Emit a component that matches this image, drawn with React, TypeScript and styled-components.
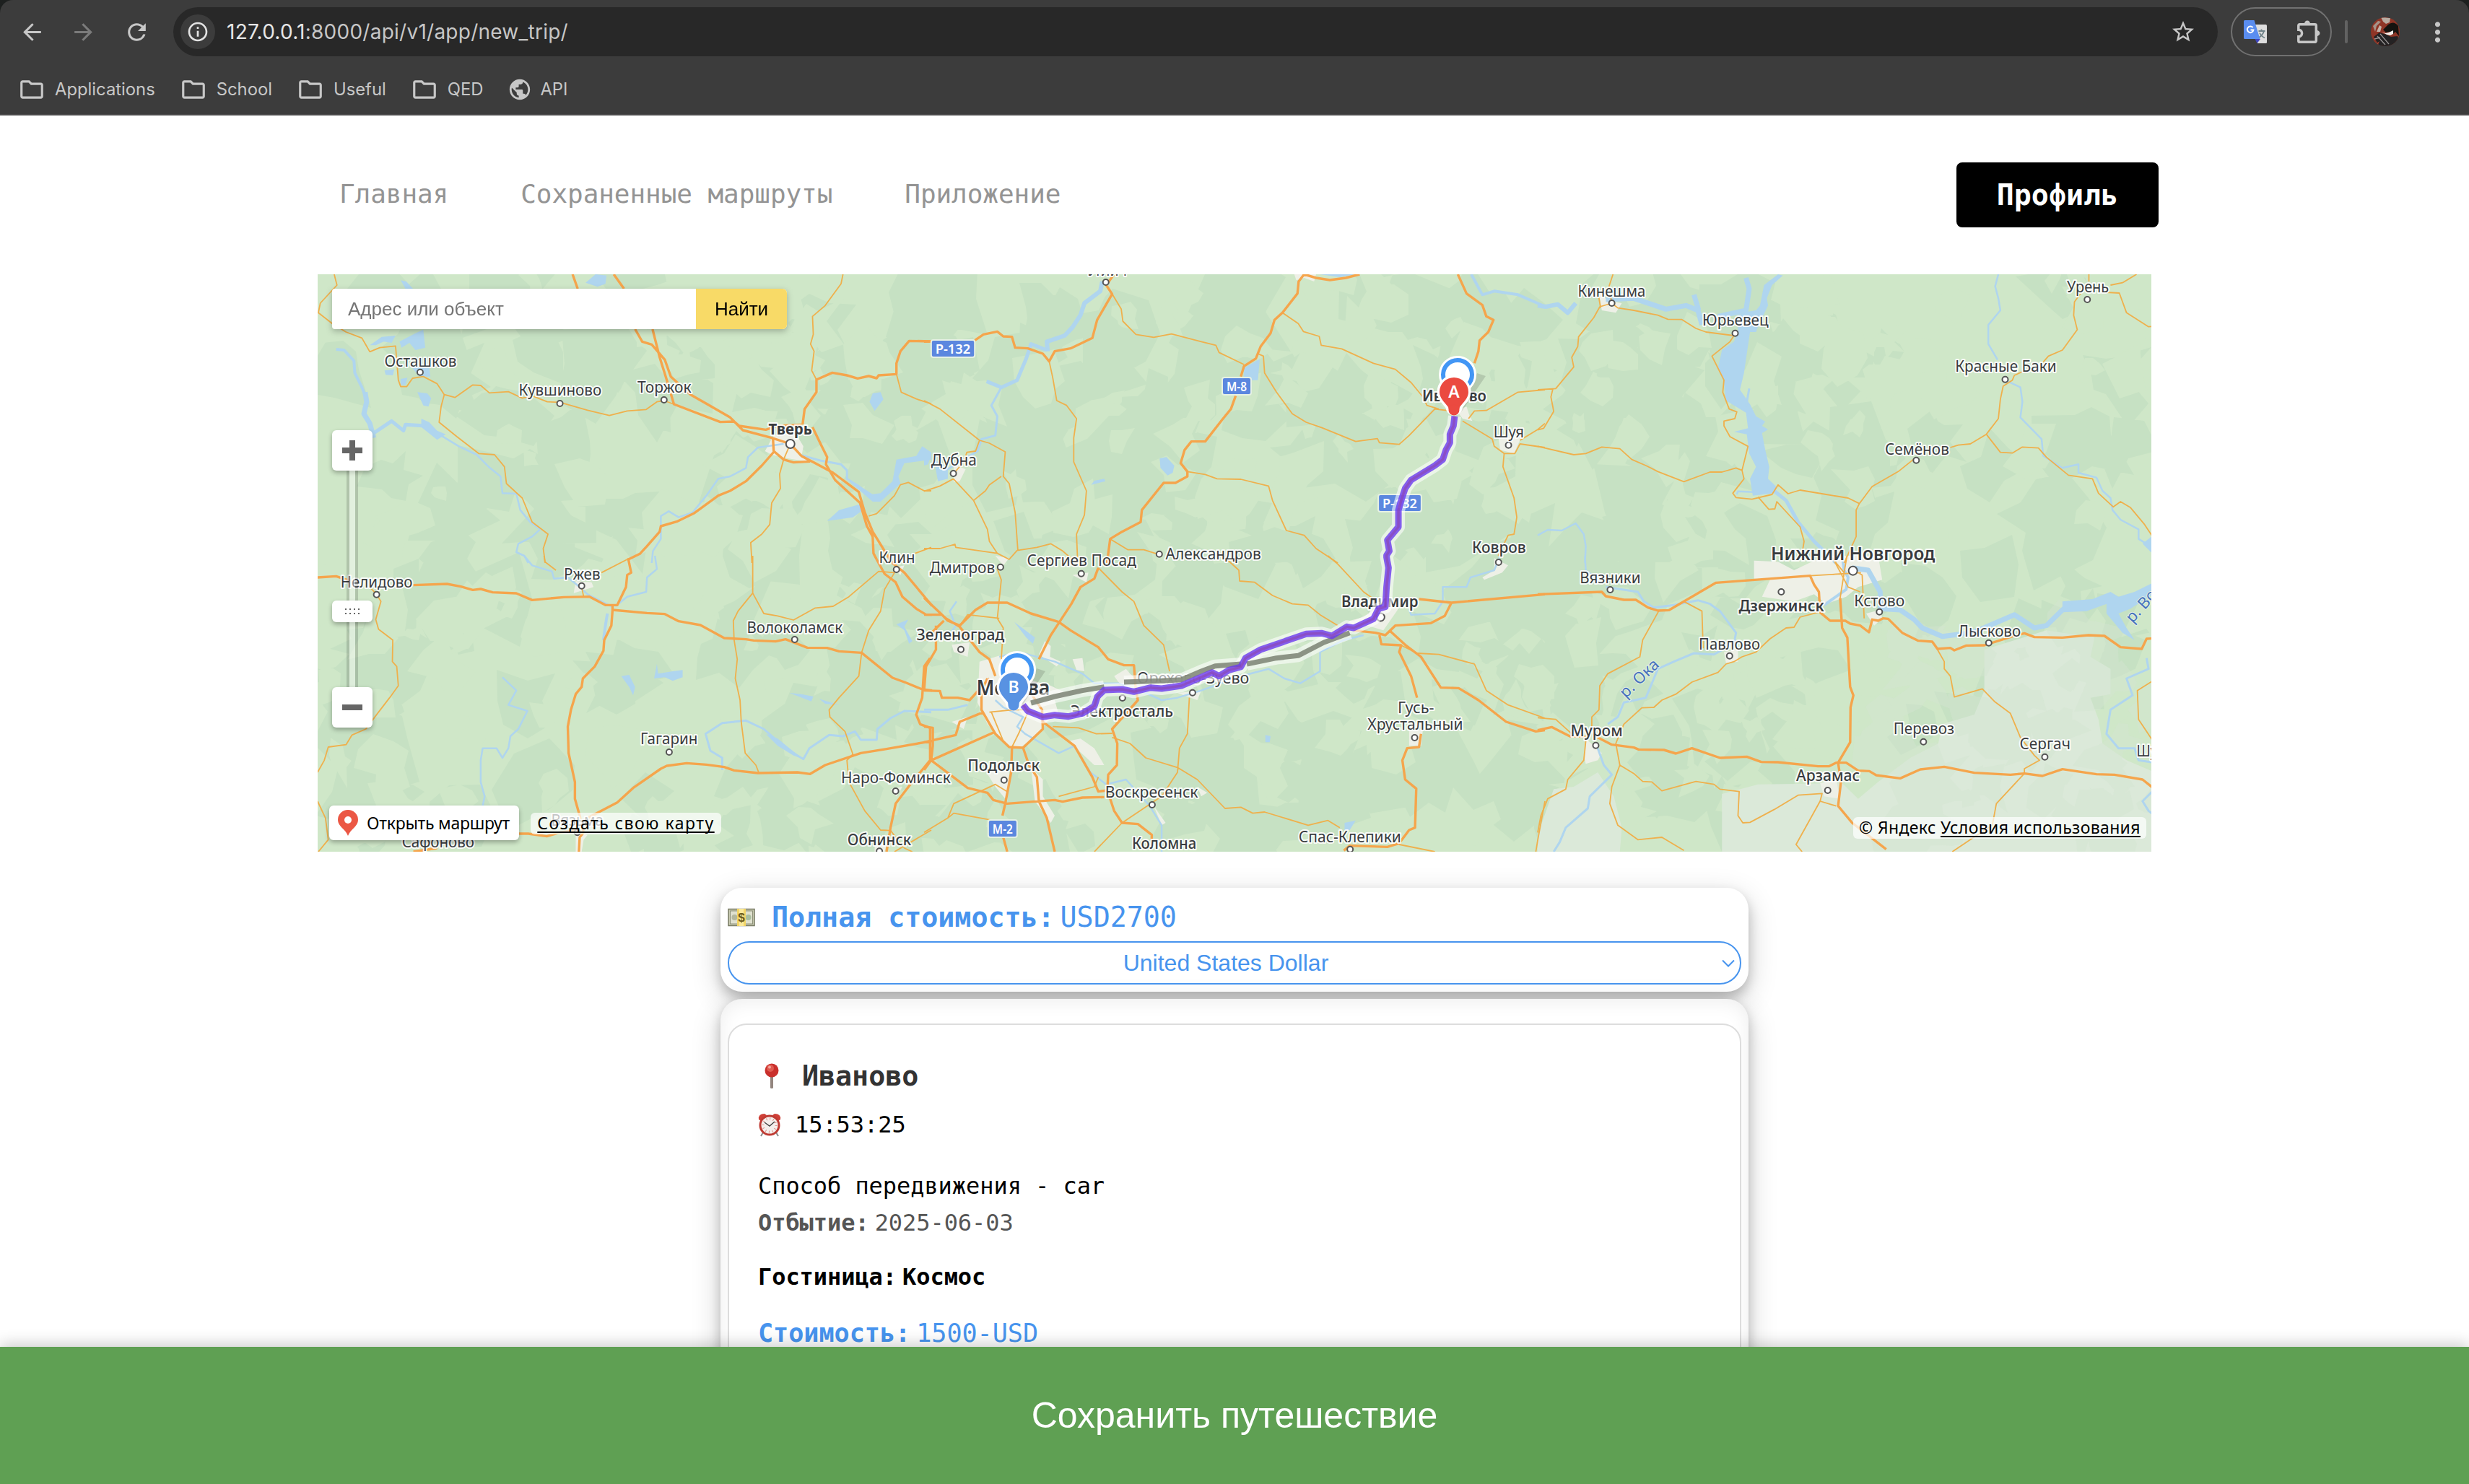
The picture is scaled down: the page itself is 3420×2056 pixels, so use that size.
import React from "react";
import styled, { createGlobalStyle } from "styled-components";
import {
  MdArrowBack,
  MdArrowForward,
  MdInfoOutline,
  MdMoreVert,
  MdOutlineFolder,
  MdPublic,
  MdRefresh,
  MdStarOutline,
} from "react-icons/md";

const GlobalStyle = createGlobalStyle`
  *, *::before, *::after { box-sizing: border-box; }
  body { margin: 0; background: #fff; }
`;

const mono = `"DejaVu Sans Mono", "Liberation Mono", monospace`;
const sans = `"Liberation Sans", Arial, sans-serif`;
const ui = `Inter, Roboto, sans-serif`;
const mapFont = `"Noto Sans", "Open Sans", sans-serif`;
const blue = "#4794ee";

/* ---------- window ---------- */

const Window = styled.div`
  position: relative;
  display: flex;
  flex-direction: column;
  width: 3420px;
  height: 2056px;
  overflow: hidden;
  background: #fff;
`;

const ChromeBack = styled.header`
  background: #1d201f;
`;

const Chrome = styled.div`
  display: flex;
  flex-direction: column;
  height: 160px;
  background: #3c3c3c;
  border-bottom: 2px solid #4b4a4b;
  border-radius: 18px 18px 0 0;
  font-family: ${ui};
  color: #c7c7c7;
`;

const Toolbar = styled.div`
  display: flex;
  align-items: center;
  height: 88px;
  padding-left: 26px;
  > * { flex: none; }
`;

const ToolButton = styled.span<{ $w: number; $dim?: boolean }>`
  display: flex;
  align-items: center;
  justify-content: center;
  width: ${(p) => p.$w}px;
  height: 48px;
  color: ${(p) => (p.$dim ? "#7b7b7b" : "#c7c7c7")};
`;

const AddressBar = styled.div`
  display: flex;
  align-items: center;
  width: 2832px;
  height: 68px;
  margin-left: 30px;
  padding: 0 30px 0 10px;
  border-radius: 34px;
  background: #282828;
`;

const InfoBadge = styled.span`
  display: flex;
  align-items: center;
  justify-content: center;
  width: 48px;
  height: 48px;
  border-radius: 50%;
  background: #3c3c3c;
  color: #e3e3e3;
`;

const Url = styled.span`
  flex: 1;
  margin-left: 16px;
  font-size: 28px;
  letter-spacing: 0.25px;
  color: #c7c7c7;
  b { font-weight: 400; color: #e6e6e6; }
`;

const Extensions = styled.div`
  display: flex;
  align-items: center;
  justify-content: space-between;
  width: 140px;
  height: 68px;
  margin-left: 18px;
  padding: 0 14px 0 16px;
  border: 2px solid #717171;
  border-radius: 34px;
`;

const Separator = styled.span`
  width: 4px;
  height: 32px;
  margin: 0 32px 0 18px;
  border-radius: 2px;
  background: #626262;
`;

const Bookmarks = styled.div`
  display: flex;
  align-items: center;
  height: 70px;
  padding: 1px 0 0 25px;
  gap: 34px;
  font-size: 23.8px;
`;

const Bookmark = styled.span<{ $gap?: number }>`
  display: flex;
  align-items: center;
  gap: ${(p) => p.$gap ?? 13}px;
`;

/* ---------- page ---------- */

const Nav = styled.nav`
  display: flex;
  align-items: center;
  height: 90px;
  margin: 65px 430px 65px 470px;
  gap: 100px;
  font-family: ${mono};
`;

const NavLink = styled.a`
  margin-bottom: 3px;
  font-size: 36px;
  letter-spacing: -0.07px;
  line-height: 86px;
  color: #949494;
`;

const ProfileButton = styled.button`
  width: 280px;
  height: 90px;
  margin-left: auto;
  padding: 0;
  border: 0;
  border-radius: 8px;
  background: #000;
  color: #fff;
  font: 700 40px/89px ${mono};
`;

const MapPanel = styled.section`
  position: relative;
  width: 2540px;
  height: 800px;
  flex: none;
  margin-left: 440px;
  overflow: hidden;
  font-family: ${mapFont};
`;

const MapCanvas = styled.svg`
  display: block;
`;

const SearchBox = styled.div`
  position: absolute;
  left: 20px;
  top: 20px;
  display: flex;
  width: 630px;
  height: 56px;
  border-radius: 4px 6px 6px 4px;
  overflow: hidden;
  background: #fff;
  font: 26px/56px ${sans};
  filter: drop-shadow(0 3px 4px rgba(0, 0, 0, 0.25));
`;

const SearchField = styled.span`
  flex: 1;
  padding-left: 22px;
  color: #757575;
`;

const SearchButton = styled.span`
  width: 126px;
  text-align: center;
  background: #f8da67;
  color: #000;
`;

const ZoomColumn = styled.div`
  position: absolute;
  left: 20px;
  top: 216px;
  display: flex;
  flex-direction: column;
  align-items: center;
  width: 56px;
`;

const ZoomTrack = styled.span<{ $h: number }>`
  width: 16px;
  height: ${(p) => p.$h}px;
  border: solid rgba(0, 0, 0, 0.15);
  border-width: 0 4px;
  background: rgba(255, 255, 255, 0.4);
  background-clip: padding-box;
`;

const ZoomKey = styled.span<{ $h: number }>`
  display: flex;
  align-items: center;
  justify-content: center;
  width: 56px;
  height: ${(p) => p.$h}px;
  border-radius: 6px;
  background: #fff;
  box-shadow: 0 3px 6px rgba(0, 0, 0, 0.3);
`;

const OpenRoute = styled.div`
  position: absolute;
  left: 16px;
  bottom: 16px;
  display: flex;
  align-items: center;
  gap: 12px;
  width: 263px;
  height: 48px;
  padding-left: 12px;
  border-radius: 6px;
  background: #fff;
  box-shadow: 0 3px 6px rgba(0, 0, 0, 0.3);
  font-size: 23px;
  letter-spacing: -0.25px;
  line-height: 44px;
  white-space: nowrap;
`;

const MapNote = styled.div<{ $side: "left" | "right"; $offset: number; $w: number; $bottom: number; $spacing: number }>`
  position: absolute;
  ${(p) => p.$side}: ${(p) => p.$offset}px;
  bottom: ${(p) => p.$bottom}px;
  width: ${(p) => p.$w}px;
  height: 30px;
  border-radius: 6px;
  background: rgba(255, 255, 255, 0.7);
  font-size: 23px;
  line-height: 28px;
  letter-spacing: ${(p) => p.$spacing}px;
  text-align: center;
  white-space: nowrap;
  color: #000;
  u { text-decoration-thickness: 2px; text-underline-offset: 3px; text-decoration-skip-ink: none; }
`;

/* ---------- trip cards ---------- */

const Cards = styled.main`
  display: flex;
  flex-direction: column;
  gap: 10px;
  width: 1424px;
  margin: 50px 0 0 998px;
  font-family: ${mono};
`;

const Card = styled.section<{ $pad: string; $inset?: boolean }>`
  flex: none;
  padding: ${(p) => p.$pad};
  border-radius: 30px;
  background: #fff;
  box-shadow: 0 8px 16px rgba(0, 0, 0, 0.2), 0 12px 40px rgba(0, 0, 0, 0.19)
    ${(p) => (p.$inset ? ", inset 0 4px 26px rgba(0, 0, 0, 0.07)" : "")};
`;

const TotalLine = styled.div`
  display: flex;
  align-items: center;
  height: 62px;
  margin-bottom: 2px;
  font-size: 38.4px;
  letter-spacing: -0.08px;
  line-height: 62px;
  color: ${blue};
  svg { margin-right: 23px; }
  b { margin-right: 8px; }
`;

const CurrencySelect = styled.div`
  display: flex;
  align-items: center;
  justify-content: center;
  position: relative;
  height: 60px;
  padding-right: 24px;
  border: 2px solid ${blue};
  border-radius: 30px;
  font: 32px/56px ${sans};
  color: ${blue};
  svg { position: absolute; right: 7px; top: 23px; }
`;

const Stop = styled.article`
  height: 760px;
  padding: 41px 40px;
  border: 2px solid #ddd;
  border-radius: 26px;
  background: #fff;
`;

const Line = styled.div<{ $h?: number; $size?: number; $top?: number; $color?: string; $bold?: boolean }>`
  display: flex;
  align-items: center;
  height: ${(p) => p.$h ?? 48}px;
  margin-top: ${(p) => p.$top ?? 0}px;
  font-size: ${(p) => p.$size ?? 32}px;
  font-weight: ${(p) => (p.$bold ? 700 : 400)};
  letter-spacing: -0.002em;
  line-height: ${(p) => p.$h ?? 48}px;
  white-space: pre;
  color: ${(p) => p.$color ?? "#000"};
  b { margin-right: 8px; }
`;

const IconSlot = styled.span<{ $w: number; $pad?: number }>`
  display: flex;
  width: ${(p) => p.$w}px;
  padding-left: ${(p) => p.$pad ?? 0}px;
`;

const SaveBar = styled.button`
  position: absolute;
  left: 0;
  bottom: 0;
  width: 100%;
  height: 190px;
  border: 0;
  background: #5fa053;
  box-shadow: 0 -4px 20px rgba(0, 0, 0, 0.2);
  color: #fff;
  font: 50px/190px ${sans};
  padding: 0;
`;

/* ---------- map data ---------- */

/* The sheets of the map: each has its own origin and scale. */
type Sheet = { ox: number; oy: number; sx: number; major?: string; minor?: string; rivers?: [number, string][]; lakes?: string; towns?: string; pale?: string };
const W = 860 / 1568;
const E = 870 / 1568;

const sheets: Record<string, Sheet> = {
  nw: {
    ox: -10, oy: -10, sx: W,
    major: "M662 30L675 90M766 30L792 90M820 258L838 310L862 322L895 385L910 455L960 530L1000 568L1060 625L1075 650L1092 678L1165 710L1212 735M864 258L882 375L902 480L918 570L1035 644L1070 642L1083 660L1150 676L1180 660L1240 655M1569 309L1512 307L1490 350L1480 400L1480 445L1435 450L1430 462L1410 453L1382 463L1355 450L1318 439L1278 468L1278 520L1248 590L1243 655M1212 735L1240 785L1275 815L1320 855L1385 935L1400 1020L1420 1100L1452 1185L1470 1230M1268 665L1290 740L1305 790L1302 820L1325 885L1388 980L1405 1075L1420 1120L1422 1190L1430 1215M1168 710L1170 765L1195 800L1220 812L1262 808M1172 765L1140 825L1100 890L1060 930L1030 950L970 1022L925 1058L885 1077L882 1100L850 1160L832 1192L803 1215",
    minor: "M60 30L67 75L25 150L20 190L55 235L90 270L130 295L150 352L175 335L215 328L222 470L228 497L243 497L258 462L285 455L320 485L338 530L330 580L325 645L370 705L425 775L465 780L490 830L495 900L535 960L560 1060L600 1110L588 1170L593 1230M338 530L365 542L410 490L430 492L452 523L500 518L535 545L560 535L598 560L630 562L700 595L755 617L800 598L848 592L875 560L893 555L918 570M1345 30L1340 70L1300 160L1268 205L1270 280L1263 320L1272 350L1266 430L1278 468M1480 445L1492 520L1530 548L1568 568M1212 735L1195 800L1185 860L1187 920L1165 980L1160 1070L1140 1110L1112 1145L1115 1230M1410 1035L1430 1025L1475 950L1490 905L1510 895L1550 930L1568 930M1527 1190L1568 1165",
    rivers: [
      [4, "M65 342L85 345L110 390L112 440L130 500L145 560"],
      [7, "M138 520L142 560L135 610L150 650L160 710"],
      [5, "M160 690L205 640L235 680L240 655L290 660"],
      [2.5, "M330 700L375 745L420 780L450 830L480 870L485 940L520 942L530 1010L555 1060L580 1090L560 1120L525 1150L520 1185L540 1200L550 1230"],
      [2.5, "M1195 735L1130 750L1105 790L1100 835L1060 870L1030 880L1000 950L965 1020L930 1040L905 1015L885 1035L885 1130L865 1180L862 1230"],
      [3, "M1235 780L1290 805L1340 820L1355 845L1355 880L1420 950"],
    ],
    lakes: "M150 325L180 290L215 285L205 315L185 310L165 325ZM225 310L265 275L285 260L290 335L265 345L250 315L230 335ZM187 430L212 425L208 450L190 448ZM228 465L245 460L240 490L228 490ZM255 415L300 420L303 455L275 455ZM270 520L295 525L305 545L298 580L285 575ZM228 55L242 60L262 95L240 90ZM280 630L300 645L320 680L342 695L320 718L280 665ZM720 30L748 35L745 70L725 82L695 65ZM1420 525L1440 520L1447 550L1425 598L1412 560ZM1480 800L1530 785L1545 745L1568 770L1568 800L1535 808L1500 815L1485 870L1490 900L1440 975L1420 975L1360 890L1380 900L1415 945L1440 940L1470 890ZM1305 1055L1335 1010L1390 985L1400 1005L1370 1040Z",
    towns: "M1148 765L1170 700L1225 690L1245 745L1240 790L1260 810L1205 795L1165 780Z",
  },
  n: {
    ox: 840, oy: -10, sx: W,
    major: "M0 310L20 309M128 305L150 280L185 268L200 288L222 290L230 335L262 338L300 360L316 392L330 350L370 338L425 295L437 220L475 112L460 75L480 30M960 30L946 60L943 110L905 190L885 220L875 275L850 330L838 380L808 412L800 455M787 535L775 590L755 630L710 725L675 725L658 760L648 815L665 850L665 870L635 897L605 897L550 1010L547 1060L500 1100L470 1130L462 1230M960 30L990 45L1025 54L1065 45L1100 30M1348 30L1370 110L1410 158L1420 205L1438 220L1425 270L1403 305L1400 350L1390 400",
    minor: "M475 112L498 175L502 225L535 280L580 292L625 278L700 310L737 325L745 355L808 405M316 392L325 460L335 555L360 575L385 630L378 710L378 810L410 930L405 1030L385 1110L388 1230M905 190L945 235L958 268L998 288L1003 325L1055 340L1135 400L1190 425L1230 480L1260 540L1270 575L1300 590M843 360L857 370L860 440L890 520L930 610L965 645L1005 668L1090 725L1145 713L1150 730L1200 737L1225 700L1290 590L1340 600M0 555L40 590L140 720L165 732L205 768L200 870L215 900L230 1020L237 1180M140 720L130 765L108 770L100 810L74 860M74 880L40 910L0 932M74 880L125 970L155 930L165 905L195 870M125 970L160 1090L165 1140L185 1190L215 1215L235 1178L285 1165L320 1150L350 1180L385 1230M0 1170L40 1170L78 1152L80 1165L185 1190M665 850L710 862L740 880L800 882L870 910L880 970L915 1095L960 1115L990 1170L1045 1230M470 1130L515 1175L555 1175L594 1195M1375 630L1390 598L1420 596L1500 520L1568 510M1360 640L1435 715L1440 745L1465 775L1492 775L1505 735L1568 750M1505 720L1550 675L1568 650M1465 775L1462 830L1490 960L1497 1040L1490 1110L1475 1115L1450 1200",
    rivers: [
      [6, "M450 60L445 100L405 150L395 200L375 250L355 285L310 310L312 350"],
      [5, "M310 345L270 320L258 380L235 470L195 500L158 475"],
      [3, "M195 500L170 575L185 620L180 700L145 715L135 765L50 850"],
      [4, "M1382 30L1410 115L1440 100L1500 115L1570 165"],
    ],
    lakes: "M808 455L808 420L848 382L843 470L825 470ZM595 795L612 790L632 825L628 855L615 866L597 835ZM422 905L430 888L455 880L458 890ZM0 750L18 780L10 820L0 825ZM25 800L60 830L60 880L35 890ZM1000 30L1090 30L1050 42Z",
    towns: "M935 30L990 30L985 60L960 45L940 55ZM1345 595L1370 580L1378 620L1385 640L1360 630ZM1450 700L1510 700L1490 775L1455 760ZM75 820L105 840L90 890L75 895Z",
  },
  ne: {
    ox: 1690, oy: -10, sx: E,
    minor: "M188 30L178 80L185 150L155 165L140 210L102 290L100 330L85 375L90 415L45 505L0 510M152 120L157 170M38 505L33 540L40 600L15 670L0 677M185 150L200 170L240 180L300 200L325 217L360 218L395 255L420 270L490 285L480 310L435 370L465 470L462 520L478 590L497 602L492 630L465 640L465 660L480 705L525 745L510 845L495 835L460 852L430 852L365 892L300 850L270 825L235 800L205 755L160 748L120 775L90 780L0 745M510 845L515 880L487 940L495 958L535 965L585 945L600 905L625 942L655 927L720 945L775 960L803 983M550 955L577 1007L592 1005L597 975L655 1080L665 1140L660 1190M803 983L795 1010L795 1120L765 1230M803 983L835 912L900 850L945 790M1030 750L1050 740L1080 735L1120 695L1150 630L1155 550L1162 495L1185 470L1190 450L1210 435M1262 395L1275 370L1310 345L1347 260L1338 200L1340 145L1355 110M1376 30L1376 60M1430 75L1460 65L1495 30M1420 105L1452 108L1470 190L1525 248L1545 245M1120 695L1155 770L1185 773L1210 748L1250 752L1270 790L1325 865L1385 880L1400 940L1437 997L1455 975L1480 1000L1515 1070L1535 1120",
    rivers: [
      [6, "M0 160L20 165L50 155L75 190L95 150"],
      [7, "M170 135L240 130L320 175L370 160L400 180L410 240M390 115L402 180"],
      [7, "M520 45L528 90L520 180L450 205"],
      [5, "M590 930L620 970L650 1060L690 1140L745 1230"],
      [3, "M528 505L520 580"],
      [2.5, "M497 945L500 932L540 935"],
      [2.5, "M1150 30L1142 80L1150 130L1155 180L1125 240L1125 320L1148 385"],
      [2.5, "M1167 470L1205 500L1210 560L1205 625L1258 715L1262 785L1310 835L1350 820L1350 855L1395 875L1410 930L1430 960L1435 1010L1455 1050L1500 1090L1500 1130L1520 1150"],
      [2.5, "M0 1115L25 1092L60 1095L95 1065L115 1110L120 1160L118 1230"],
    ],
    lakes: "M600 30L565 75L555 160L545 180L525 185L500 200L500 270L490 310L460 345L450 420L465 480L470 555L520 605L525 670L490 685L522 695L528 775L545 830L530 880L537 950L590 940L597 915L575 880L578 830L568 760L560 690L575 675L560 660L568 642L545 620L530 570L505 510L515 440L530 270L545 270L552 240L575 160L572 130L585 75L612 35ZM1540 1110L1510 1150L1540 1200Z",
    towns: "M152 100L175 140L210 150L195 190L160 180Z",
  },
  sw: {
    ox: -10, oy: 390, sx: W,
    major: "M18 90L65 85L110 110M260 122L345 117L380 128L410 142L430 138L460 152L520 156L560 184L640 172L705 170L745 205L775 205L797 130L800 80L810 70L803 15L803 10M763 205L763 225L850 238L895 242L930 272L985 288L1045 342L1100 347L1120 352L1175 356L1200 347L1255 382L1305 383L1335 397L1392 403L1470 507L1505 528L1545 555L1570 560M763 225L760 290L742 350L740 395L718 460L688 510L685 545L670 575L658 640L650 710L652 820L668 940L668 1010L680 1080L690 1150L680 1170L678 1230M527 1155L550 1155L597 1166L630 1150L675 1140M700 1090L775 1025L815 965L885 885L900 873L950 862L1000 868L1045 878L1070 892L1130 903L1230 900L1262 907L1300 870L1390 820L1455 803L1570 770M1430 15L1450 75L1478 110L1495 170L1530 220L1555 245L1570 245M1470 30L1500 70L1570 208M1565 425L1550 460L1545 590L1530 660L1540 700L1565 715L1565 850L1520 940L1478 1030L1465 1130L1455 1230M260 1230L320 1215",
    minor: "M590 0L592 25L620 60M735 70L800 15M685 130L690 170M150 130L167 160L178 190L165 265L172 305L208 350L207 440L218 460L222 540L200 590L165 665L140 720L105 745L90 785L45 795L35 850L18 900M18 1020L38 1090L45 1180L20 1230M1117 0L1117 155L1080 230L1068 270L1070 350L1078 430L1073 510L1085 600L1088 690L1098 820L1125 870L1132 900M1117 155L1145 240L1180 250L1220 267L1275 217L1320 210L1360 170L1435 65L1475 70L1450 140L1440 230L1410 310L1392 403L1385 500L1335 590L1310 640L1312 670L1350 730L1370 825L1355 850L1360 940L1400 1060L1440 1140L1465 1142L1500 1215L1520 1230M1475 1230L1568 1140",
    rivers: [
      [2.5, "M540 0L560 40L610 65L615 95L650 90L680 130L700 160L765 215"],
      [2.5, "M870 0L875 55L850 90L848 150L800 170L770 210"],
      [4, "M750 240L745 290L740 350"],
      [2.5, "M485 505L520 560L500 620L548 645L525 720L505 750L500 800L485 840L470 800L435 800L430 850L430 940L440 1000L435 1040"],
      [3, "M1040 890L1040 840L1010 810L998 740L1040 695L1100 685L1145 720L1200 800L1245 845L1260 800L1310 745L1345 750L1375 730L1390 765L1430 765L1432 720L1465 675L1500 645L1568 650"],
    ],
    lakes: "M868 510L875 450L878 490L915 480L940 475L940 505L915 520L895 505ZM785 500L805 495L820 545L815 580L805 545ZM1210 570L1240 575L1270 585L1265 605ZM1285 595L1335 620L1300 615ZM1480 285L1510 265L1500 295L1520 355L1512 365L1500 310ZM1150 740L1180 760L1210 800L1245 845L1220 830L1180 790Z",
    towns: "M665 155L670 105L710 110L715 130ZM1470 50L1500 40L1490 80ZM670 1150L700 1160L690 1180L685 1230L670 1230ZM1465 970L1495 960L1480 1000ZM1425 1200L1455 1200L1450 1230L1425 1230Z",
  },
  s: {
    ox: 840, oy: 390, sx: W,
    major: "M0 175L55 260L90 295L140 400L165 430L180 500M0 245L45 245L60 270L90 290L130 225L160 195L210 195L270 240L340 275L370 310L440 380L465 430L505 455L530 455L535 560L540 600L475 720L488 780L487 870L465 910L463 970M440 50L430 95L395 130L372 200L340 280L320 330L290 430M0 350L50 270M30 290L30 390L5 460L0 560M0 560L40 562L45 590L85 590L115 600L165 510M0 775L80 745L90 690L150 650M0 710L22 715L22 790L18 850L175 735M0 890L18 850L110 965L160 985L175 1015L210 1030L330 1015L350 1022L400 1005L455 1003M160 510L145 560L145 640L180 740L215 795L250 798L300 720L298 640L265 560M222 795L220 900L205 1030L198 1080M200 1170L210 1230M250 798L265 870L285 920L290 1020L310 1090L330 1230M300 690L380 790L425 920L440 980L463 975L480 1060L500 1110L540 1115L575 1160L575 1180M1085 310L1140 320L1165 330L1190 290L1280 280L1315 250L1332 195M1250 180L1332 195L1568 160M1175 310L1215 370L1255 420L1305 548L1350 550L1400 600L1470 690L1545 730L1568 725M1150 330L1155 368L1205 372L1200 400L1230 500L1245 590M1255 740L1250 795L1220 800L1208 850L1215 930L1243 968L1240 1130L1225 1140L1200 1195L1170 1210L1075 1205L1060 1225",
    minor: "M185 55L195 100L185 260L200 300L195 430M90 290L110 245L190 260M440 50L500 150L530 190L555 290L605 370L620 480M755 0L795 60L797 105L835 110L880 165L930 200L970 205L1000 245L1045 290M1020 0L1045 35L1110 150L1140 185M1205 372L1245 405L1300 410L1390 450L1420 560L1475 620L1568 675M325 710L390 715L435 740L475 738M475 755L520 780L560 840L640 880L690 930L760 1050L800 1045L830 1070L860 1065L970 1120L1020 1100L1050 1130M670 590L665 740L645 800L640 900L600 1000L500 1110L430 1230M0 1150L60 1090L75 1030L180 950L210 980M340 1000L430 960L440 920M60 1090L75 1070L175 1100M1568 1020L1550 1180L1545 1230M1200 1200L1290 1230M225 640L165 650M225 640L265 640L240 735L222 795M170 650L200 770",
    rivers: [
      [2.5, "M82 190L65 230L80 290L60 340"],
      [2.5, "M190 420L240 400L330 440L400 490L430 530L490 530L560 570L600 600L640 590L700 560L800 500L870 470L910 510L950 530L1000 480L1000 400L1060 350L1110 330"],
      [2.5, "M180 600L200 630L250 670L235 710L255 740L340 820L380 790L420 900L460 950L510 930L570 1040L600 1120L600 1230"],
      [3, "M0 640L60 640L110 620"],
      [2.5, "M1455 0L1440 60L1380 90L1370 130L1310 130L1310 190L1290 240L1230 245L1225 220"],
    ],
    lakes: "M228 275L280 340L275 365L258 340ZM862 745L875 750L873 775L862 775ZM1062 1110L1090 1100L1075 1140L1062 1140Z",
    towns: "M140 440L200 410L260 440L275 520L320 540L370 580L330 600L340 660L300 700L290 740L245 795L215 795L160 700L135 610ZM290 410L305 355L320 375L318 420L345 440L335 460ZM375 430L400 425L405 480L385 475ZM150 880L200 850L215 900L210 1020L180 960ZM270 880L300 930L300 1000L330 1080L320 1110L280 1020ZM365 770L395 760L430 800L455 870L430 870ZM70 370L115 360L110 420L75 400ZM480 500L510 470L520 490L540 520L500 545ZM640 570L700 560L690 600ZM580 1040L610 1110L600 1120ZM690 960L715 985L700 1000ZM1145 210L1200 215L1160 310L1120 290L1060 300L1075 270L1110 255ZM1440 10L1475 40L1460 70L1415 100L1410 90L1440 60ZM375 80L415 70L410 110ZM180 0L215 10L200 40ZM1225 730L1260 720L1255 790L1225 790ZM70 690L110 670L100 720Z",
  },
  se: {
    ox: 1690, oy: 390, sx: E,
    major: "M0 160L160 150L170 168L215 183L245 183L275 215L300 228L328 226L365 190L445 112L680 83L690 120L702 150L705 235L730 270L768 270L780 282L805 290L827 318L835 265L850 270L862 260L875 262L910 320L950 353L985 357L998 387L1030 383L1040 393L1070 373L1115 372L1185 335L1215 322L1240 338L1310 340L1375 330L1415 333L1455 380L1508 387L1520 345L1540 343M755 175L760 300L773 340L780 545L788 580L781 630L780 775L750 860L757 940L750 1040L785 1110L870 1220M0 725L35 712L80 750L120 752M150 755L185 785L240 797L252 805L315 807L345 822L385 800L455 840L522 835L558 857L600 858L700 875L727 875L745 860L770 860L800 893L828 895L845 912L905 925L955 888L1015 877L1090 902L1180 910L1215 905L1260 915L1310 887L1395 908L1440 910L1510 930L1540 970",
    minor: "M0 673L45 680L85 740M302 230L262 350L255 420L175 490L155 540L153 640L135 670L135 710M365 190L410 230L413 385M700 235L655 255L640 297L620 300L580 345L545 400L510 420L490 440L470 450L450 485L385 525L345 575L310 600L290 630L260 632L215 700L195 780L205 870L185 960L180 1030L200 1120L250 1180L310 1170L365 1225M205 870L240 905L262 938L285 940L310 977L395 938L440 950L455 970L503 980L500 1080L512 1110L530 1108L590 1055L650 995L710 988L705 1020L745 1040M705 1020L645 1200L660 1230M998 390L1015 440L1015 470L1030 500L1040 587L1110 553L1140 605L1180 655L1205 755L1240 830L1253 850L1215 885L1215 905L1145 1030L1135 1120L1080 1180L1035 1230M120 770L115 850L75 930L70 970L25 1010L8 1080L0 1150M1540 515L1497 560L1500 680L1540 780M680 83L760 75L807 70M765 70L755 175M740 20L775 130L805 150M800 70L810 80L815 260M730 0L765 70M772 0L765 70",
    rivers: [
      [7, "M785 50L825 60L855 150L855 220L905 225L940 265L960 300L1010 335L1060 325L1100 310L1190 245L1240 300L1270 290L1310 225L1330 195"],
      [4, "M760 0L765 60L775 90L770 140L715 205"],
      [3, "M170 130L250 150L265 190L290 215L340 205L400 185L430 200L455 230L495 320L490 365L440 410L390 405L340 440L300 470L270 590L215 610L200 670L175 700"],
      [3, "M150 800L165 870L185 910L130 1000L125 1050L70 1130L55 1190L40 1230"],
      [3, "M1520 425L1525 470L1470 510L1485 580L1430 640L1420 740L1450 800L1490 800L1500 850L1540 860M1540 970L1510 1020L1525 1060L1540 1080"],
      [2.5, "M118 0L120 60L160 110"],
    ],
    lakes: "M1310 190L1385 180L1430 150L1450 170L1490 150L1545 105L1545 150L1480 220L1450 240L1470 300L1490 350L1460 320L1420 240L1420 200L1370 230L1310 235Z",
    towns: "M540 20L600 25L640 60L690 20L720 0L850 0L860 100L800 130L770 170L720 200L690 160L640 190L560 170L580 100L540 95ZM820 240L855 225L860 260L840 290ZM465 400L500 390L500 440L470 445ZM120 760L160 820L150 850L120 865L115 830ZM705 945L745 930L755 1010L715 1000Z",
    pale: "M1115 390L1270 310L1390 340L1380 420L1430 470L1430 575L1380 590L1400 680L1410 780L1470 850L1540 900L1540 1230L460 1230L460 990L550 950L760 945L800 1010L850 940L930 840L1000 780L1010 700L1090 660L1115 560ZM0 1160L40 970L90 960L150 900L190 1000L210 1130L205 1230L0 1230Z",
  },
};

const place = (k: string, x: number, y: number): [number, number] => {
  const s = sheets[k];
  return [s.ox + x * s.sx, s.oy + y / 3];
};

/* [sheet, name, left, right, baseline, weight, size] */
type Label = [string, string, number, number, number, number?, number?];
const labels: Label[] = [
  ["nw", "Осташков", 187, 369, 410], ["nw", "Кувшиново", 526, 735, 532], ["nw", "Торжок", 826, 962, 518],
  ["nw", "Тверь", 1157, 1267, 692, 700], ["nw", "Клин", 1436, 1527, 1227],
  ["n", "Углич", 413, 512, 34], ["n", "Дубна", 18, 133, 823], ["n", "Александров", 610, 851, 1213],
  ["s", "Сергиев Посад", 260, 536, 38], ["n", "Иваново", 1258, 1420, 556, 600], ["n", "Шуя", 1438, 1515, 704],
  ["n", "Ковров", 1384, 1520, 1184, 500], ["ne", "Кинешма", 100, 269, 120], ["ne", "Юрьевец", 411, 576, 241],
  ["ne", "Урень", 1321, 1426, 102], ["ne", "Красные Баки", 1042, 1295, 431], ["ne", "Семёнов", 867, 1027, 776],
  ["ne", "Нижний Новгород", 582, 992, 1215, 600, 25], ["sw", "Нелидово", 76, 258, 128], ["sw", "Ржев", 640, 732, 95],
  ["sw", "Волоколамск", 1102, 1344, 317], ["sw", "Гагарин", 833, 978, 781], ["sw", "Сафоново", 231, 414, 1208],
  ["sw", "Вязьма", 608, 740, 1120], ["sw", "Наро-Фоминск", 1340, 1617, 943], ["sw", "Обнинск", 1356, 1517, 1199, 500],
  ["s", "Дмитров", 14, 179, 69], ["s", "Зеленоград", -19, 203, 348, 500], ["s", "Москва", 132, 318, 575, 600, 29],
  ["s", "Подольск", 110, 292, 892, 500], ["s", "Электросталь", 370, 629, 667, 500], ["s", "Орехово-Зуево", 538, 821, 529],
  ["s", "Воскресенск", 457, 692, 1002], ["s", "Коломна", 525, 688, 1216, 500], ["s", "Спас-Клепики", 946, 1205, 1189],
  ["s", "Гусь-", 1196, 1288, 650], ["s", "Хрустальный", 1120, 1361, 721], ["s", "Владимир", 1054, 1248, 211, 600],
  ["se", "Вязники", 105, 257, 111], ["se", "Дзержинск", 502, 715, 227, 600], ["se", "Кстово", 790, 916, 206],
  ["se", "Павлово", 402, 555, 387], ["se", "Лысково", 1050, 1206, 333], ["se", "Муром", 82, 212, 747, 500],
  ["se", "Перевоз", 888, 1040, 738], ["se", "Сергач", 1203, 1330, 802], ["se", "Арзамас", 645, 804, 933, 500],
  ["se", "Шумерля", 1495, 1650, 831],
];

const dots: [string, number, number, number?][] = [
  ["nw", 277, 437], ["nw", 630, 567], ["nw", 893, 552], ["nw", 1212, 735, 6], ["sw", 1480, 57], ["n", 459, 63], ["n", 74, 858],
  ["n", 594, 1193], ["s", 397, 74], ["n", 1476, 740], ["s", 1451, 27], ["ne", 185, 150], ["ne", 493, 275], ["ne", 1372, 135],
  ["ne", 1167, 467], ["ne", 945, 803], ["se", 787, 62, 6], ["sw", 167, 161], ["sw", 685, 125], ["sw", 1223, 348], ["sw", 906, 816],
  ["sw", 674, 1150], ["sw", 1478, 978], ["sw", 1437, 1228], ["s", 193, 47], ["s", 93, 389], ["s", 202, 932], ["s", 501, 591],
  ["s", 678, 569], ["s", 576, 1035], ["s", 1076, 1220], ["s", 1239, 756], ["s", 1153, 255, 5.5], ["se", 181, 141], ["se", 608, 150],
  ["se", 853, 233], ["se", 479, 416], ["se", 1126, 362], ["se", 145, 788], ["se", 963, 773], ["se", 1266, 836], ["se", 724, 975],
];

const shields: [string, string, number, number, number][] = [
  ["n", "Р-132", 18, 128, 303], ["n", "М-8", 753, 826, 459], ["n", "Р-132", 1147, 1256, 945], ["s", "М-2", 162, 235, 1098],
];

const routeNorth = [[1340, 620], [1337, 660], [1328, 695], [1328, 730], [1318, 760], [1310, 800], [1290, 825], [1230, 885], [1215, 920], [1205, 970], [1198, 1010], [1198, 1080], [1170, 1135], [1175, 1180], [1168, 1198]];
const routeSouth = [[1168, 6], [1173, 50], [1168, 130], [1165, 212], [1148, 220], [1135, 262], [1085, 300], [1068, 295], [1030, 333], [1005, 322], [965, 325], [850, 390], [812, 425], [800, 462], [770, 475], [745, 500], [728, 485], [650, 540], [600, 552], [572, 548], [530, 565], [500, 555], [455, 558], [438, 585], [430, 625], [400, 655], [365, 668], [330, 662], [300, 670], [262, 645], [250, 620]];
const route = [
  ...routeNorth.map(([x, y]) => place("n", x, y)),
  ...routeSouth.map(([x, y]) => place("s", x, y)),
].map((p) => p.join(",")).join(" ");
const alternatives = [
  [[270, 612], [330, 585], [400, 560], [455, 545]],
  [[505, 525], [600, 520], [650, 515], [700, 480], [735, 458], [800, 450]],
  [[815, 450], [890, 425], [945, 415], [1010, 360], [1075, 320]],
].map((part) => part.map(([x, y]) => place("s", x, y).join(",")).join(" "));

/* Woodland: angular patches from a fixed seed, denser in the middle of the map. */
function woodland() {
  let seed = 20250603;
  const rnd = () => ((seed = (seed * 1664525 + 1013904223) % 4294967296) / 4294967296);
  const patch = (cx: number, cy: number, r: number) => {
    const n = 7 + Math.floor(rnd() * 5);
    let d = "";
    for (let i = 0; i < n; i++) {
      const a = (i / n) * Math.PI * 2;
      const q = r * (0.3 + rnd() * 1.05);
      d += `${i ? "L" : "M"}${(cx + Math.cos(a) * q).toFixed(0)} ${(cy + Math.sin(a) * q).toFixed(0)}`;
    }
    return d + "Z";
  };
  let dark = "";
  let light = "";
  let open = "";
  for (let i = 0; i < 440; i++) {
    const x = rnd() * 2540;
    const y = rnd() * 800;
    const dense = x > 560 && x < 2050 ? 1 : 0.42;
    if (rnd() < dense) dark += patch(x, y, 26 + rnd() * 50);
  }
  for (let i = 0; i < 330; i++) light += patch(rnd() * 2540, rnd() * 800, 12 + rnd() * 34);
  for (let i = 0; i < 60; i++) open += patch(2150 + rnd() * 390, 480 + rnd() * 320, 10 + rnd() * 40);
  return { dark, light, open };
}
const woods = woodland();

const Marker = ({ x, y, color, letter }: { x: number; y: number; color: string; letter: string }) => (
  <g>
    <path d={`M${x + 10} ${y + 28}L${x + 44} ${y - 22}L${x + 32} ${y - 26}Z`} fill="rgba(0,0,0,.13)" />
    <circle cx={x + 5} cy={y - 24} r="21" fill="#fff" stroke="#fff" strokeWidth="10" />
    <circle cx={x + 5} cy={y - 24} r="20" fill="#fff" stroke="#4296f5" strokeWidth="6" />
    <g stroke="#fff" strokeWidth="7" strokeLinejoin="round" fill={color} paintOrder="stroke">
      <path d={`M${x - 20} ${y}a20 20 0 1 1 40 0c0 9 -7 14 -12 21a8 8 0 1 1 -16 0c-5 -7 -12 -12 -12 -21Z`} />
    </g>
    <circle cx={x} cy={y + 25} r="7.5" fill={color} />
    <text x={x} y={y + 8} textAnchor="middle" fontSize="23" fontWeight="600" fill="#fff">{letter}</text>
  </g>
);

const RouteMap = () => (
  <MapCanvas width="2540" height="800" viewBox="0 0 2540 800" fontFamily={mapFont}>
    <rect width="2540" height="800" fill="#cfe7c8" />
    <path d={woods.dark} fill="#c6e1c3" />
    <path d={woods.light} fill="#cfe7c8" />
    {(["pale", "towns", "lakes", "rivers", "minor", "major"] as const).map((layer) => (
      <g key={layer} strokeLinejoin="round" fill="none">
        {Object.entries(sheets).map(([k, s]) => (
          <g key={k} transform={`translate(${s.ox} ${s.oy}) scale(${s.sx} ${1 / 3})`}>
            {layer === "pale" && s.pale && <path d={s.pale} fill="#dbe9d9" />}
            {layer === "towns" && <path d={s.towns} fill="#eef0e7" />}
            {layer === "lakes" && <path d={s.lakes} fill="#afd5ef" />}
            {layer === "rivers" && s.rivers?.map(([w, d]) => (
              <path key={d} d={d} stroke="#afd5ef" strokeWidth={w} vectorEffect="non-scaling-stroke" />
            ))}
            {layer === "minor" && <path d={s.minor} stroke="#efb04c" strokeWidth="1.8" vectorEffect="non-scaling-stroke" />}
            {layer === "major" && s.major && <path d={s.major} stroke="#f5a54c" strokeWidth="3.4" vectorEffect="non-scaling-stroke" />}
          </g>
        ))}
        {layer === "pale" && <path d={woods.open} fill="#d2e5d0" fillOpacity="0.45" />}
      </g>
    ))}
    {dots.map(([k, x, y, r]) => {
      const [cx, cy] = place(k, x, y);
      return <circle key={`${k}${x}`} cx={cx} cy={cy} r={r ?? 4} fill="#fff" stroke="#555" strokeWidth="2" />;
    })}
    <g fill="#393c3f" stroke="#fff" strokeWidth="4" strokeLinejoin="round" paintOrder="stroke">
      {labels.map(([k, name, x1, x2, base, weight, size]) => {
        const [x, y] = place(k, x1, base);
        return (
          <text key={name} x={x} y={y + 1} fontSize={size ?? 21} fontWeight={weight ?? 400} strokeOpacity="0.9"
            textLength={(x2 - x1) * sheets[k].sx} lengthAdjust="spacingAndGlyphs">{name}</text>
        );
      })}
    </g>
    <g fill="#4672bd" fontSize="22" stroke="#e4f0e2" strokeWidth="2" paintOrder="stroke">
      <text transform="translate(1812 588) rotate(-44)" textLength="66">р. Ока</text>
      <text transform="translate(2514 484) rotate(-48)">р. Волга</text>
    </g>
    {shields.map(([k, name, x1, x2, top]) => {
      const [x, y] = place(k, x1, top);
      const w = (x2 - x1) * sheets[k].sx;
      return (
        <g key={`${name}${x1}`}>
          <rect x={x} y={y} width={w} height="24" rx="3" fill="#5b87df" stroke="#e6f1e4" strokeWidth="2" />
          <text x={x + w / 2} y={y + 19} textAnchor="middle" fontSize="18" fontWeight="600" fill="#fff" textLength={w - 12} lengthAdjust="spacingAndGlyphs">{name}</text>
        </g>
      );
    })}
    <g fill="none" strokeLinejoin="round">
      <g stroke="#fff" strokeOpacity="0.58" strokeWidth="18">
        <path d={alternatives.map((a) => "M" + a.replace(/ /g, "L")).join("")} />
        <polyline points={route} />
      </g>
      {alternatives.map((a) => <polyline key={a} points={a} stroke="#7b8273" strokeOpacity="0.85" strokeWidth="7" />)}
      <polyline points={route} stroke="#6a38ee" strokeOpacity="0.8" strokeWidth="9" />
      <polyline points={route} stroke="#8f3f9f" strokeOpacity="0.5" strokeWidth="3.5" />
    </g>
    <Marker x={1574} y={163} color="#eb4a40" letter="А" />
    <Marker x={964} y={572} color="#5892e2" letter="В" />
  </MapCanvas>
);

/* ---------- small drawings ---------- */

const TranslateIcon = () => (
  <svg width="32" height="32" viewBox="0 0 32 32">
    <path d="M12 6H30.500A1.500 1.500 0 0 1 32 7.500V30.500A1.500 1.500 0 0 1 30.500 32H19Z" fill="#dedede" />
    <path d="M20.500 15H29.500M24.500 12.500V15M28 15C27 19.500 24 22 20.500 24.500M22 17.500C23.500 21 26 23 29 24.500" stroke="#6f8289" strokeWidth="1.800" fill="none" />
    <path d="M15.500 26H23L18.500 32Z" fill="#3f45c0" />
    <path d="M1.500 0H14.500L22.500 26H1.500A1.500 1.500 0 0 1 0 24.500V1.500A1.500 1.500 0 0 1 1.500 0Z" fill="#5a8df0" />
    <path d="M12.600 10.200A4.300 4.300 0 1 0 13.400 13.600H9.500" stroke="#fff" strokeWidth="2" fill="none" />
  </svg>
);

const PuzzleIcon = () => (
  <svg width="32" height="32" viewBox="0 0 32 32" fill="none">
    <path d="M3.500 5.800H24.500A1.800 1.800 0 0 1 26.300 7.500V28.500A1.800 1.800 0 0 1 24.500 30.300H3.500A1.800 1.800 0 0 1 1.800 28.500V22.800A4.800 4.800 0 0 0 1.800 13.200V7.500A1.800 1.800 0 0 1 3.500 5.800Z" stroke="#c7c7c7" strokeWidth="3.500" />
    <path d="M10 5A4 4.500 0 0 1 18 5ZM27 14A4.500 4 0 0 1 27 22Z" fill="#c7c7c7" />
  </svg>
);

const Avatar = () => (
  <svg width="40" height="40" viewBox="0 0 40 40">
    <clipPath id="round"><circle cx="20" cy="20" r="20" /></clipPath>
    <g clipPath="url(#round)">
      <rect width="40" height="40" fill="#8f3526" />
      <path d="M14 0L27 1L26 7L21 9L17 6Z" fill="#b8aaa0" />
      <path d="M3 12L10 5L14 6L8 12L6 20Z" fill="#a59389" />
      <path d="M8 20L12 11L15 13L13 20Z" fill="#c4b2a8" />
      <path d="M24 10Q32 4 38 12L39 26L34 20L30 24L26 20L21 21L17 17Z" fill="#15130f" />
      <path d="M15 20L20 22L25 21L31 18L31 23L27 25L22 24Z" fill="#f4efeb" />
      <path d="M4 27L12 21L22 24L28 27L37 26L40 34L30 40H12Z" fill="#242223" />
      <path d="M9 26L20 38M13 23L25 37M5 30L13 28" stroke="#989494" strokeWidth="1.300" />
      <path d="M2 30L8 36L12 33L9 40L0 38Z" fill="#b04330" />
    </g>
  </svg>
);

const MoneyIcon = () => (
  <svg width="38" height="26" viewBox="0 0 38 26">
    <rect x="1" y="1.500" width="36" height="23" fill="#c9cbb2" stroke="#777a63" strokeWidth="1.500" />
    <rect x="3.500" y="4" width="31" height="18" fill="#dfe0cf" stroke="#8e927a" />
    <circle cx="9.500" cy="13" r="4" fill="#b3b79e" />
    <circle cx="28.500" cy="13" r="4" fill="#a9bfa0" />
    <rect x="13" y="1" width="12" height="24" fill="#f3d566" />
    <rect x="16" y="1" width="6" height="24" fill="#fae99b" />
    <text x="19" y="19" textAnchor="middle" fontFamily={sans} fontSize="17" fontWeight="700" fill="#6b5a1c">$</text>
  </svg>
);

const PushpinIcon = () => (
  <svg width="20" height="36" viewBox="0 0 20 36">
    <rect x="8" y="17" width="4" height="18" rx="1.500" fill="#93867f" />
    <circle cx="10" cy="10" r="9.500" fill="#c9302c" />
    <circle cx="8" cy="7" r="5" fill="#e05a50" />
    <circle cx="7" cy="5.500" r="2" fill="#f3a59c" />
  </svg>
);

const AlarmIcon = () => (
  <svg width="32" height="33" viewBox="0 0 32 33">
    <path d="M7 27L4 32M25 27L28 32" stroke="#8b8b8b" strokeWidth="2" />
    <path d="M1 9Q0 1 9 1L12 3L4 11ZM31 9Q32 1 23 1L20 3L28 11Z" fill="#cf3f36" />
    <circle cx="16" cy="17" r="13" fill="#f4efec" stroke="#bf3b33" strokeWidth="3" />
    <circle cx="16" cy="17" r="9" fill="none" stroke="#df8c86" strokeWidth="3" strokeDasharray="1 3.710" />
    <path d="M9 13L16 18L23 12" stroke="#444" strokeWidth="1.400" fill="none" />
  </svg>
);

const Grip = () => (
  <svg width="22" height="8" viewBox="0 0 22 8" fill="#666">
    {[0, 1].map((r) => [0, 1, 2, 3].map((c) => <rect key={`${r}${c}`} x={1 + c * 6} y={r * 6} width="2" height="2" />))}
  </svg>
);

/* ---------- app ---------- */

export default function App() {
  return (
    <Window>
      <GlobalStyle />
      <ChromeBack>
        <Chrome>
          <Toolbar>
            <ToolButton $w={37}><MdArrowBack size={37} /></ToolButton>
            <ToolButton $w={105} $dim><MdArrowForward size={37} /></ToolButton>
            <ToolButton $w={42}><MdRefresh size={37} /></ToolButton>
            <AddressBar>
              <InfoBadge><MdInfoOutline size={32} /></InfoBadge>
              <Url><b>127.0.0.1</b>:8000/api/v1/app/new_trip/</Url>
              <MdStarOutline size={36} />
            </AddressBar>
            <Extensions>
              <TranslateIcon />
              <PuzzleIcon />
            </Extensions>
            <Separator />
            <Avatar />
            <ToolButton $w={104}><MdMoreVert size={43} /></ToolButton>
          </Toolbar>
          <Bookmarks>
            {["Applications", "School", "Useful", "QED"].map((name) => (
              <Bookmark key={name}><MdOutlineFolder size={38} />{name}</Bookmark>
            ))}
            <Bookmark $gap={11}><MdPublic size={34} />API</Bookmark>
          </Bookmarks>
        </Chrome>
      </ChromeBack>

      <Nav>
        <NavLink>Главная</NavLink>
        <NavLink>Сохраненные маршруты</NavLink>
        <NavLink>Приложение</NavLink>
        <ProfileButton>Профиль</ProfileButton>
      </Nav>

      <MapPanel>
        <RouteMap />
        <SearchBox>
          <SearchField>Адрес или объект</SearchField>
          <SearchButton>Найти</SearchButton>
        </SearchBox>
        <ZoomColumn>
          <ZoomKey $h={56}>
            <svg width="28" height="28"><path d="M0 10h10V0h8v10h10v8H18v10h-8V18H0Z" fill="#666" /></svg>
          </ZoomKey>
          <ZoomTrack $h={180} />
          <ZoomKey $h={30}><Grip /></ZoomKey>
          <ZoomTrack $h={90} />
          <ZoomKey $h={56}>
            <svg width="28" height="8"><rect width="28" height="8" fill="#666" /></svg>
          </ZoomKey>
        </ZoomColumn>
        <OpenRoute>
          <svg width="28" height="36" viewBox="0 0 28 36">
            <path d="M14 0a14 14 0 0 1 14 14c0 9-10 12-14 22C10 26 0 23 0 14A14 14 0 0 1 14 0Z" fill="#eb5744" />
            <circle cx="14" cy="14" r="5" fill="#fff" />
          </svg>
          Открыть маршрут
        </OpenRoute>
        <MapNote $side="left" $offset={295} $w={264} $bottom={24} $spacing={1.5}><u>Создать свою карту</u></MapNote>
        <MapNote $side="right" $offset={7} $w={406} $bottom={18} $spacing={0.36}>© Яндекс <u>Условия использования</u></MapNote>
      </MapPanel>

      <Cards>
        <Card $pad="10px">
          <TotalLine>
            <MoneyIcon />
            <b>Полная стоимость:</b>USD2700
          </TotalLine>
          <CurrencySelect>
            United States Dollar
            <svg width="18" height="12" viewBox="0 0 18 12"><path d="M1 1.500L9 9.500L17 1.500" stroke={blue} strokeWidth="2" fill="none" /></svg>
          </CurrencySelect>
        </Card>
        <Card $pad="34px 10px 10px" $inset>
          <Stop>
            <Line $h={60} $size={38.4} $bold $color="#333">
              <IconSlot $w={61} $pad={9}><PushpinIcon /></IconSlot>Иваново
            </Line>
            <Line $top={13}>
              <IconSlot $w={51}><AlarmIcon /></IconSlot>15:53:25
            </Line>
            <Line $top={37}>Способ передвижения - car</Line>
            <Line $top={3} $color="#555"><b>Отбытие:</b>2025-06-03</Line>
            <Line $top={27} $bold><b>Гостиница:</b>Космос</Line>
            <Line $top={30} $size={35.2} $color={blue}><b>Стоимость:</b>1500-USD</Line>
          </Stop>
        </Card>
      </Cards>

      <SaveBar>Сохранить путешествие</SaveBar>
    </Window>
  );
}
